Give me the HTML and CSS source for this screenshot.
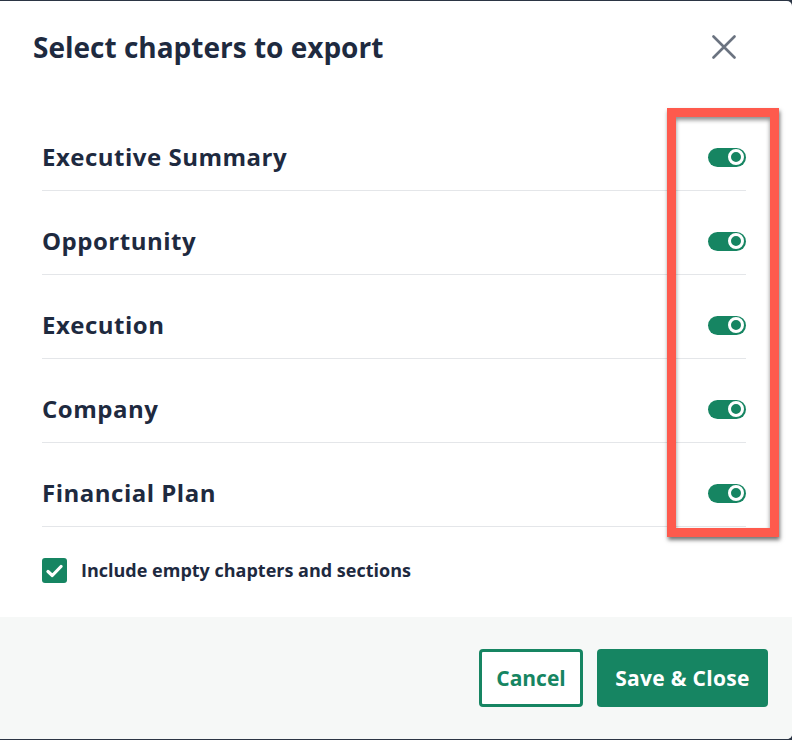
FILE: index.html
```html
<!DOCTYPE html>
<html lang="en">
<head>
  <meta charset="UTF-8" />
  <title>Select chapters to export</title>
  <link rel="stylesheet" href="styles.css">
</head>
<body>

<div class="modal">
  <div class="modal-header">
    <h2 class="modal-title">Select chapters to export</h2>
    <button class="close-btn" aria-label="Close">
      <svg width="24" height="24" viewBox="0 0 24 24">
        <path d="M1.5 1.5 L22.5 22.5 M22.5 1.5 L1.5 22.5" stroke="#6b7380" stroke-width="2.6" stroke-linecap="round" fill="none"/>
      </svg>
    </button>
  </div>

  <div class="chapter-list">
    <div class="chapter-row">
      <span class="chapter-name">Executive Summary</span>
      <span class="toggle"><span class="knob"></span></span>
    </div>
    <div class="chapter-row">
      <span class="chapter-name">Opportunity</span>
      <span class="toggle"><span class="knob"></span></span>
    </div>
    <div class="chapter-row">
      <span class="chapter-name">Execution</span>
      <span class="toggle"><span class="knob"></span></span>
    </div>
    <div class="chapter-row">
      <span class="chapter-name">Company</span>
      <span class="toggle"><span class="knob"></span></span>
    </div>
    <div class="chapter-row">
      <span class="chapter-name">Financial Plan</span>
      <span class="toggle"><span class="knob"></span></span>
    </div>

    <!-- annotation drawn over the toggles -->
    <div class="highlight"></div>
  </div>

  <label class="include-empty">
    <span class="checkbox">
      <svg width="17" height="14" viewBox="0 0 17 14">
        <path d="M2 7.5 L6.3 11.5 L15 2.5" stroke="#fff" stroke-width="3.2" stroke-linecap="round" stroke-linejoin="round" fill="none"/>
      </svg>
    </span>
    Include empty chapters and sections
  </label>

  <div class="modal-footer">
    <button class="btn btn-outline">Cancel</button>
    <button class="btn btn-primary">Save &amp; Close</button>
  </div>
</div>

</body>
</html>
```

FILE: styles.css
```css
html, body {
  margin: 0; padding: 0;
  background: #2b3544;
  font-family: 'Open Sans', Lato, sans-serif;
  color: #1e2a3f;
}

body {
  padding-top: 1px;
}

.modal {
  background: #ffffff;
  height: 738px;
  border-top-right-radius: 5px;
  border-bottom-right-radius: 5px;
  display: flex;
  flex-direction: column;
  overflow: hidden;
}

.modal-header {
  display: flex;
  justify-content: space-between;
  align-items: center;
  padding: 29px 56px 0 33px;
  height: 34px;
}

.modal-title {
  margin: 0;
  font-size: 28px;
  line-height: 34px;
  font-weight: 700;
  color: #1e2a3f;
}

.close-btn {
  border: none;
  background: none;
  padding: 0;
  cursor: pointer;
  display: flex;
}

.chapter-list {
  position: relative;
  margin-top: 43px;
  padding: 0 46px 0 42px;
}

.chapter-row {
  display: flex;
  justify-content: space-between;
  align-items: center;
  padding: 35px 0 18px 0;
  border-bottom: 1px solid #e4e6e9;
}

.chapter-name {
  font-size: 24px;
  line-height: 30px;
  font-weight: 700;
  letter-spacing: 0.5px;
}

.toggle {
  position: relative;
  width: 38px;
  height: 19px;
  border-radius: 10px;
  background: #168562;
}

.toggle .knob {
  position: absolute;
  top: 1.5px; right: 2px;
  box-sizing: border-box;
  width: 16px;
  height: 16px;
  border: 3px solid #ffffff;
  border-radius: 50%;
  background: #168562;
}

.highlight {
  position: absolute;
  top: 1px;
  left: 667px;
  width: 94px;
  height: 411px;
  border: 9px solid #fe5a4d;
  box-shadow: 1px 3px 4px rgba(0, 0, 0, 0.55), inset 0 3px 4px rgba(0, 0, 0, 0.45);
  pointer-events: none;
}

.include-empty {
  display: flex;
  align-items: center;
  gap: 14px;
  padding: 31px 0 33px 42px;
  font-size: 18px;
  line-height: 25px;
  font-weight: 700;
  color: #1e2a3f;
}

.checkbox {
  width: 25px;
  height: 25px;
  border-radius: 3px;
  background: #168562;
  display: flex;
  align-items: center;
  justify-content: center;
}

.modal-footer {
  margin-top: auto;
  background: #f6f8f7;
  display: flex;
  justify-content: flex-end;
  gap: 14px;
  padding: 32px 24px 32px 0;
}

.btn {
  height: 58px;
  border-radius: 4px;
  font-family: 'Open Sans', Lato, sans-serif;
  font-size: 21px;
  font-weight: 700;
  cursor: pointer;
  box-sizing: border-box;
}

.btn-outline {
  width: 104px;
  background: #ffffff;
  color: #168562;
  border: 3px solid #168562;
}

.btn-primary {
  width: 171px;
  background: #168562;
  color: #ffffff;
  border: none;
  letter-spacing: 0.3px;
}
```
